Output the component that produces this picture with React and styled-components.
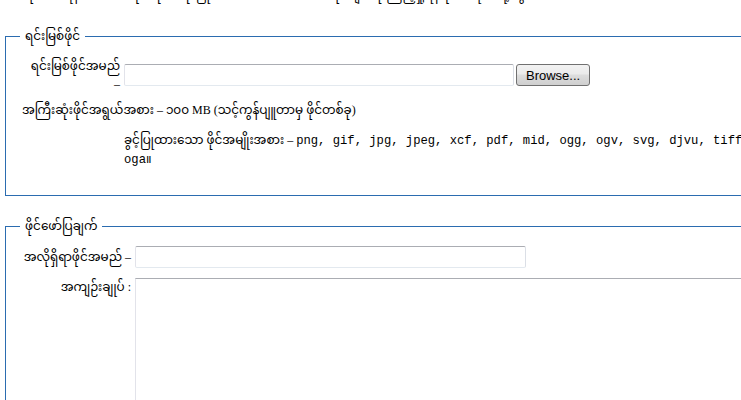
import React from "react";
import styled, { createGlobalStyle } from "styled-components";

const GlobalStyle = createGlobalStyle`
  html, body { margin: 0; padding: 0; background: #fff; overflow: hidden; }
  body {
    font-family: "Liberation Serif", "Noto Sans Myanmar", "Padauk", "Myanmar Text", serif;
    font-size: 12px;
    color: #000;
  }
`;

const Page = styled.div`
  width: 795px;
  margin-top: -15px;
  padding: 0 0 0 5px;
`;

const Intro = styled.p`
  margin: 0 0 25px 22px;
  line-height: 18px;
  height: 18px;
  white-space: nowrap;
`;

const Fieldset = styled.fieldset`
  margin: 0 0 ${(p) => p.$gap || 0}px 0;
  border: 1px solid #2b6cb0;
  padding: ${(p) => p.$top}px 0 ${(p) => p.$bottom}px 16px;
  min-width: 0;
`;

const Legend = styled.legend`
  padding: 0 5px;
  margin-left: -2px;
  line-height: 16px;
  height: 16px;
`;

const Grid = styled.div`
  display: grid;
  grid-template-columns: ${(p) => p.$label}px 1fr;
  column-gap: 4px;
  row-gap: ${(p) => p.$rowGap}px;
  align-items: center;
`;

const Label = styled.label`
  text-align: right;
  line-height: 18px;
  white-space: ${(p) => (p.$nowrap ? "nowrap" : "normal")};
  align-self: ${(p) => (p.$start ? "start" : "center")};
  padding-top: ${(p) => p.$top || 0}px;
`;

const FieldRow = styled.div`
  display: flex;
  align-items: center;
  gap: 2px;
`;

const TextInput = styled.input`
  box-sizing: border-box;
  width: ${(p) => p.$w}px;
  height: 22px;
  margin: 0;
  border: 1px solid #abadb3;
  border-left-color: #e2e3ea;
  border-right-color: #dbdfe6;
  border-bottom-color: #e3e9ef;
  border-radius: 2px;
  background: #fff;
`;

const Button = styled.button`
  box-sizing: border-box;
  height: 22px;
  padding: 0 9px;
  margin: 0;
  border: 1px solid #707070;
  border-radius: 3px;
  background: linear-gradient(#f2f2f2 0%, #ebebeb 45%, #dddddd 50%, #cfcfcf 100%);
  font-family: "Liberation Sans", Arial, sans-serif;
  font-size: 13px;
  color: #000;
`;

const Span = styled.div`
  grid-column: 1 / -1;
  line-height: 18px;
`;

const Info = styled.div`
  grid-column: 2;
  line-height: 18px;
  margin-top: 4px;
`;

const Mono = styled.span`
  font-family: "Liberation Mono", "Courier New", monospace;
  font-size: 12.2px;
`;

const TextArea = styled.textarea`
  box-sizing: border-box;
  width: 700px;
  height: 200px;
  margin: 0;
  border: 1px solid #abadb3;
  border-left-color: #e2e3ea;
  border-bottom-color: #e3e9ef;
  resize: none;
  align-self: start;
`;

export default function App() {
  return (
    <>
      <GlobalStyle />
      <Page>
        <Intro>
          ဖိုင်တင်ရန် အောက်ပါပုံစံကို အသုံးပြုပါ။ ယခင်တင်ထားသော ဖိုင်များကို ကြည့်ရှုရန် ဖိုင်စာရင်း သို့ သွားပါ။
        </Intro>
        <Fieldset $gap={22} $top={13} $bottom={26}>
          <Legend>ရင်းမြစ်ဖိုင်</Legend>
          <Grid $label={98} $rowGap={8}>
            <Label>ရင်းမြစ်ဖိုင်အမည် –</Label>
            <FieldRow>
              <TextInput type="text" $w={390} />
              <Button type="button">Browse...</Button>
            </FieldRow>
            <Span>
              အကြီးဆုံးဖိုင်အရွယ်အစား – ၁၀၀ MB (သင့်ကွန်ပျူတာမှ ဖိုင်တစ်ခု)
            </Span>
            <Info>
              ခွင့်ပြုထားသော ဖိုင်အမျိုးအစား –{" "}
              <Mono>png, gif, jpg, jpeg, xcf, pdf, mid, ogg, ogv, svg, djvu, tiff, tif, oga</Mono>။
            </Info>
          </Grid>
        </Fieldset>
        <Fieldset $top={12} $bottom={10}>
          <Legend>ဖိုင်ဖော်ပြချက်</Legend>
          <Grid $label={109} $rowGap={10}>
            <Label $nowrap>အလိုရှိရာဖိုင်အမည် –</Label>
            <TextInput type="text" $w={391} />
            <Label $start $top={0}>အကျဉ်းချုပ် :</Label>
            <TextArea />
          </Grid>
        </Fieldset>
      </Page>
    </>
  );
}
